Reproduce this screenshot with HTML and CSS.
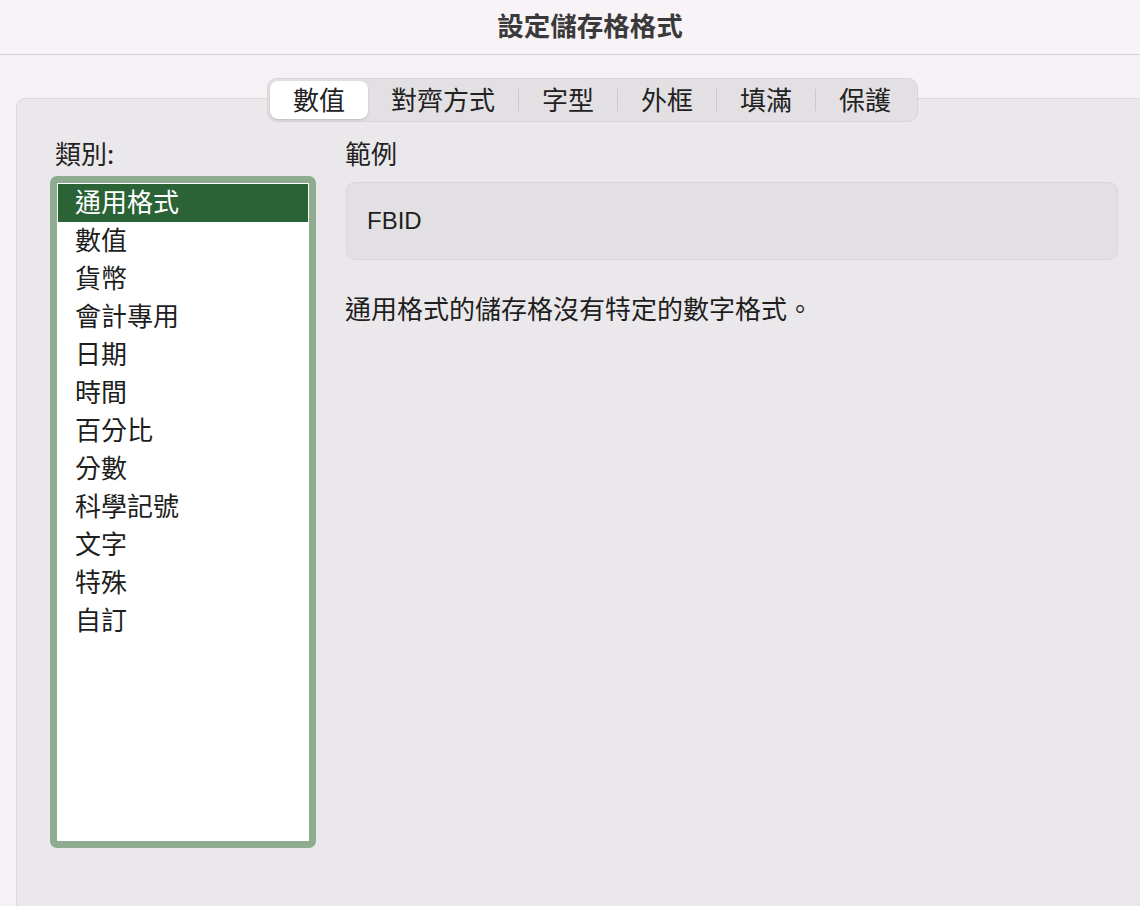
FILE: index.html
```html
<!DOCTYPE html>
<html lang="zh-Hant">
<head>
<meta charset="utf-8">
<title>設定儲存格格式</title>
<link rel="stylesheet" href="styles.css">
</head>
<body>
<div class="window">
  <header class="titlebar">設定儲存格格式</header>
  <section class="panel">
    <nav class="tabs">
      <div class="tab active">數值</div>
      <div class="tab">對齊方式</div>
      <span class="sep"></span>
      <div class="tab">字型</div>
      <span class="sep"></span>
      <div class="tab">外框</div>
      <span class="sep"></span>
      <div class="tab">填滿</div>
      <span class="sep"></span>
      <div class="tab">保護</div>
    </nav>
    <div class="content">
      <div class="left">
        <div class="label cat-label">類別:</div>
        <ul class="listbox">
          <li class="item selected">通用格式</li>
          <li class="item">數值</li>
          <li class="item">貨幣</li>
          <li class="item">會計專用</li>
          <li class="item">日期</li>
          <li class="item">時間</li>
          <li class="item">百分比</li>
          <li class="item">分數</li>
          <li class="item">科學記號</li>
          <li class="item">文字</li>
          <li class="item">特殊</li>
          <li class="item">自訂</li>
        </ul>
      </div>
      <div class="right">
        <div class="label">範例</div>
        <div class="sample">FBID</div>
        <p class="desc">通用格式的儲存格沒有特定的數字格式。</p>
      </div>
    </div>
  </section>
</div>
</body>
</html>
```
FILE: styles.css
```css
* { box-sizing: border-box; }
html, body {
  margin: 0;
  padding: 0;
  width: 1140px;
  height: 906px;
  overflow: hidden;
  background: #f5f1f4;
  font-family: "Noto Sans CJK TC", "Noto Sans", sans-serif;
  color: #222;
}
.window {
  width: 1140px;
  height: 906px;
  overflow: hidden;
}
.titlebar {
  height: 55px;
  border-bottom: 1px solid #d6d2d5;
  background: #f7f3f6;
  display: flex;
  align-items: center;
  justify-content: center;
  font-size: 26.5px;
  font-weight: 700;
  color: #3b3a3b;
  padding-left: 40px;
  padding-bottom: 5px;
}
.panel {
  margin: 43px -40px 0 16px;
  height: 900px;
  background: #ebe8eb;
  border: 1px solid #dcd8dc;
  border-radius: 9px;
}
.tabs {
  display: flex;
  align-items: stretch;
  width: 651px;
  height: 44px;
  margin: -21px 0 0 250px;
  padding: 2px;
  background: #e3e0e3;
  border: 1px solid #d8d4d8;
  border-radius: 10px;
  position: relative;
}
.tab {
  padding: 0 23px 2px;
  font-size: 26px;
  line-height: 36px;
  color: #222;
  white-space: nowrap;
  border-radius: 8px;
}
.tab.active {
  background: #fff;
  box-shadow: 0 1px 2px rgba(0,0,0,0.18);
}
.sep {
  width: 1px;
  height: 22px;
  align-self: center;
  background: #cbc7cb;
}
.content {
  display: flex;
  gap: 29px;
  padding: 16px 0 0 33px;
}
.label {
  font-size: 26px;
  line-height: 30px;
  padding-bottom: 2px;
  color: #222;
}
.cat-label { padding-left: 5px; }
.left { width: 266px; }
.listbox {
  list-style: none;
  margin: 6px 0 0 0;
  width: 266px;
  height: 672px;
  padding: 1px;
  background: #fff;
  border: 7px solid #8fab90;
  border-radius: 7px;
}
.item {
  height: 38px;
  line-height: 34px;
  padding: 0 0 4px 17px;
  font-size: 26px;
  color: #1e1e1e;
}
.item.selected {
  background: #2b6236;
  color: #fff;
}
.right { width: 774px; }
.sample {
  margin: 12px 0 0 1px;
  width: 772px;
  height: 78px;
  background: #e3e0e3;
  border: 1px solid #dad7da;
  border-radius: 9px;
  padding-left: 20px;
  display: flex;
  align-items: center;
  font-family: "Liberation Sans", Arial, sans-serif;
  font-size: 24px;
  color: #1e1e1e;
}
.desc {
  margin: 33px 0 0 0;
  font-size: 26px;
  line-height: 30px;
  color: #1e1e1e;
}
```
